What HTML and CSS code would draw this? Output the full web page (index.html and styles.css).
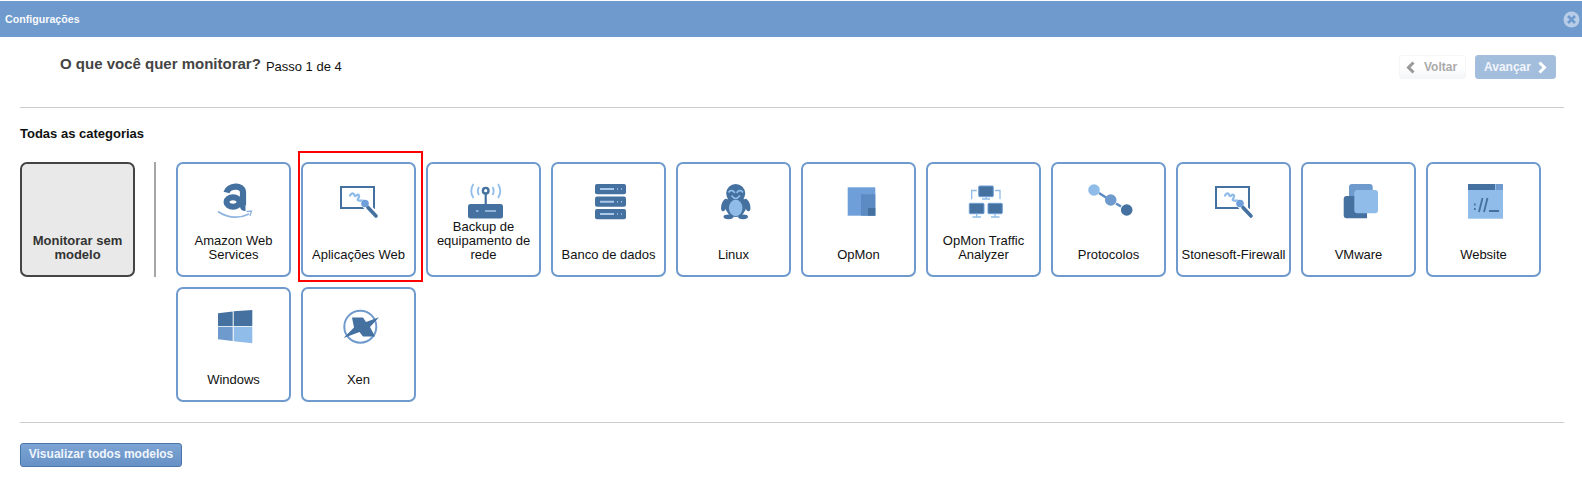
FILE: index.html
```html
<!DOCTYPE html>
<html lang="pt-BR">
<head>
<meta charset="utf-8">
<title>Configurações</title>
<link rel="stylesheet" href="styles.css">
</head>
<body>
<svg class="defs" width="0" height="0" aria-hidden="true">
  <symbol id="paint" viewBox="0 0 36 36" overflow="visible">
    <rect x="-1" y="3" width="33" height="21" fill="#fff" stroke="#44719f" stroke-width="2"/>
    <path d="M8 11.500c2-3.500 4-2 4.500 0s3.500-2.500 4.500 0-3 4-.5 5 4-1 6 1" fill="none" stroke="#8fbce8" stroke-width="2.300" stroke-linecap="round"/>
    <path d="M20 17l15 16" fill="none" stroke="#fff" stroke-width="7.500"/>
    <path d="M26 23.500l8 8.500" fill="none" stroke="#44719f" stroke-width="3.600" stroke-linecap="round"/>
    <circle cx="23" cy="19.500" r="3.800" fill="#6f9fd8"/>
  </symbol>
</svg>

<header class="titlebar">
  <span class="titlebar-text">Configurações</span>
  <svg class="close" width="17" height="17" viewBox="0 0 17 17"><circle cx="8.500" cy="8.500" r="8" fill="#b7cce6"/><path d="M5 5l7 7M12 5l-7 7" stroke="#6f9acd" stroke-width="2.600"/></svg>
</header>

<section class="wizard-head">
  <h1 class="wizard-title">O que você quer monitorar?</h1>
  <span class="wizard-step">Passo 1 de 4</span>
  <div class="wizard-nav">
    <button class="btn-back" type="button"><svg width="9" height="13" viewBox="0 0 9 13"><path d="M7.500 1.500L2.500 6.500l5 5" fill="none" stroke="#999" stroke-width="3"/></svg>Voltar</button>
    <button class="btn-next" type="button">Avançar<svg width="9" height="13" viewBox="0 0 9 13"><path d="M1.500 1.500l5 5-5 5" fill="none" stroke="#fff" stroke-width="3"/></svg></button>
  </div>
</section>

<hr class="rule">

<h2 class="section-title">Todas as categorias</h2>

<section class="catalog">
  <button class="card card-plain" type="button"><span class="card-label">Monitorar sem modelo</span></button>
  <div class="vsep"></div>
  <div class="cards">
    <button class="card" type="button">
      <svg class="ico" viewBox="0 0 36 36"><path d="M9.500 8.500C11 2 26-.5 26 8.500v13c0 1.500.7 2.500 2.500 2.500" fill="none" stroke="#44719f" stroke-width="6.200"/><ellipse cx="16" cy="18" rx="6.500" ry="4.800" fill="none" stroke="#44719f" stroke-width="6"/><path d="M1 27.500c10 7 22 7 31 2.500" fill="none" stroke="#8fb5e0" stroke-width="1.800"/><path d="M29.500 27.500l5-.5-1.500 5" fill="none" stroke="#8fb5e0" stroke-width="1.300"/></svg>
      <span class="card-label">Amazon Web Services</span>
    </button>
    <button class="card card-marked" type="button">
      <svg class="ico"><use href="#paint"/></svg>
      <span class="card-label">Aplicações Web</span>
    </button>
    <button class="card" type="button">
      <svg class="ico" viewBox="0 0 36 36"><rect x="1" y="20" width="35" height="14.500" rx="2.500" fill="#44719f"/><path d="M18.700 9v12" stroke="#44719f" stroke-width="2.200"/><circle cx="18.700" cy="6.700" r="2.800" fill="#fff" stroke="#44719f" stroke-width="2.400"/><path d="M6.500 0C3.500 4 3.500 10 6.500 14M31 0c3 4 3 10 0 14M12 3c-1.500 2.500-1.500 5.500 0 8M25.500 3c1.500 2.500 1.500 5.500 0 8" fill="none" stroke="#8fbce8" stroke-width="1.800"/><path d="M9 27h2.500M18 27h11" stroke="#a9c8ea" stroke-width="1.700"/></svg>
      <span class="card-label">Backup de equipamento de rede</span>
    </button>
    <button class="card" type="button">
      <svg class="ico" viewBox="0 0 36 36"><g fill="#44719f"><rect x="3" y="0" width="31" height="10.300" rx="2"/><rect x="3" y="12.500" width="31" height="10.300" rx="2"/><rect x="3" y="25" width="31" height="10.300" rx="2"/></g><path d="M8 5h14M8 17.700h14M8 30h14" stroke="#a9c8ea" stroke-width="1.900"/><path d="M25 5h1M29 5h1M25 17.700h1M29 17.700h1M25 30h1M29 30h1" stroke="#a9c8ea" stroke-width="1.500"/></svg>
      <span class="card-label">Banco de dados</span>
    </button>
    <button class="card" type="button">
      <svg class="ico" viewBox="0 0 36 36"><g fill="#44719f"><circle cx="18.700" cy="9.500" r="9.500"/><ellipse cx="18.700" cy="22" rx="10.500" ry="11"/><ellipse cx="7.500" cy="21" rx="3" ry="6.500" transform="rotate(18 7.500 21)"/><ellipse cx="30" cy="21" rx="3" ry="6.500" transform="rotate(-18 30 21)"/><ellipse cx="11.500" cy="32.800" rx="5" ry="2.400"/><ellipse cx="26" cy="32.800" rx="5" ry="2.400"/></g><ellipse cx="18.700" cy="24" rx="6.800" ry="8.300" fill="#8fbce8"/><path d="M11.500 8.500c2-3 5-2 6.300.5M26 8.500c-2-3-5-2-6.300.5" fill="none" stroke="#8fbce8" stroke-width="1.700"/><path d="M14.500 11.500c1.500 2 2.800 3 4.200 3s2.700-1 4.200-3" fill="none" stroke="#8fbce8" stroke-width="1.700"/></svg>
      <span class="card-label">Linux</span>
    </button>
    <button class="card" type="button">
      <svg class="ico" viewBox="0 0 36 36"><rect x="5.700" y="3.300" width="27.600" height="28.400" fill="#6f9fd8"/><rect x="19" y="10.300" width="14.300" height="21.400" fill="#5b8bc2"/><rect x="26" y="24" width="7.300" height="7.700" fill="#44719f"/></svg>
      <span class="card-label">OpMon</span>
    </button>
    <button class="card" type="button">
      <svg class="ico" viewBox="0 0 36 36"><g fill="#44719f" stroke="#6f9fd8" stroke-width="1"><rect x="11.700" y="2" width="14.600" height="10.700" rx="1"/><rect x="2.300" y="19.300" width="14.700" height="10.400" rx="1"/><rect x="21" y="19.300" width="14.300" height="10.400" rx="1"/></g><path d="M19 12.700v2M15 15h8M9.700 29.700v3M5.500 33h8.500M28 29.700v3M24 33h8.500M4.700 15.300V6.500h5M33 15.300V6.500h-5" fill="none" stroke="#8fbce8" stroke-width="1.300"/></svg>
      <span class="card-label">OpMon Traffic Analyzer</span>
    </button>
    <button class="card" type="button">
      <svg class="ico" viewBox="0 0 36 36" overflow="visible"><path d="M7 9l7 4.500M24 19.500l5 3" stroke="#5b8bc2" stroke-width="2.600"/><circle cx="2" cy="6" r="5.800" fill="#8fbce8"/><circle cx="18.700" cy="16" r="5.800" fill="#6f9acd"/><circle cx="34.700" cy="26" r="5.800" fill="#44719f"/></svg>
      <span class="card-label">Protocolos</span>
    </button>
    <button class="card" type="button">
      <svg class="ico"><use href="#paint"/></svg>
      <span class="card-label">Stonesoft-Firewall</span>
    </button>
    <button class="card" type="button">
      <svg class="ico" viewBox="0 0 36 36"><rect x="7" y="0" width="23.700" height="24" rx="3" fill="#6f9acd"/><path d="M1.700 15a3 3 0 0 1 3-3H25v22.300H4.700a3 3 0 0 1-3-3z" fill="#44719f"/><rect x="12.300" y="6" width="23.700" height="23.300" rx="3" fill="#8fbce8"/></svg>
      <span class="card-label">VMware</span>
    </button>
    <button class="card" type="button">
      <svg class="ico" viewBox="0 0 36 36"><rect x="1" y="0" width="35" height="34.700" fill="#8fbce8"/><rect x="1" y="0" width="27" height="6" fill="#44719f"/><rect x="29" y="0" width="7" height="6" fill="#6f9acd"/><path d="M7 20.500h1.600M7 25h1.600M12 28l3.500-14M17 28l3.500-14M22 27h10" fill="none" stroke="#44719f" stroke-width="1.800"/></svg>
      <span class="card-label">Website</span>
    </button>
    <button class="card" type="button">
      <svg class="ico" viewBox="0 0 36 36"><path d="M1 4.300L15.700 2.500V17H1z" fill="#44719f"/><path d="M16.700 2.300L35.300 1v16H16.700z" fill="#44719f"/><path d="M1 17.700H15.700V32L1 30.300z" fill="#6f9acd"/><path d="M16.700 17.700H35.300V34.300L16.700 32.200z" fill="#8fbce8"/></svg>
      <span class="card-label">Windows</span>
    </button>
    <button class="card" type="button">
      <svg class="ico" viewBox="0 0 36 36" overflow="visible"><circle cx="18.300" cy="17.700" r="16" fill="none" stroke="#6f9acd" stroke-width="2"/><path d="M10 8.500h11l3 4.500L37 8.300 28 18l5 9.500H21l-3.500-4.500L1.500 29 12 18.500z" fill="#44719f"/></svg>
      <span class="card-label">Xen</span>
    </button>
  </div>
</section>

<hr class="rule rule-bottom">

<button class="btn-all" type="button">Visualizar todos modelos</button>
</body>
</html>
```
FILE: styles.css
```css
* { box-sizing: border-box; }
html, body { margin: 0; padding: 0; }
body {
  background: #fff;
  color: #111;
  font-family: "Liberation Sans", Arial, sans-serif;
  font-size: 13px;
  height: 497px;
  overflow: hidden;
}
button { font-family: inherit; cursor: pointer; }
.defs { position: absolute; }

.titlebar {
  margin-top: 1px;
  height: 36px;
  background: #6f9acd;
  display: flex;
  align-items: center;
  justify-content: space-between;
  padding: 0 2px 0 5px;
}
.titlebar-text { color: #fff; font-size: 10.67px; font-weight: 700; opacity: .95; }
.close { display: block; margin-top: 1px; }

.wizard-head {
  display: flex;
  align-items: flex-start;
  padding: 18px 26px 0 60px;
  height: 70px;
}
.wizard-title {
  margin: 0;
  color: #444;
  font-size: 15px;
  font-weight: 700;
  line-height: 17px;
}
.wizard-step { margin: 5px 0 0 5px; font-size: 13px; line-height: 14px; color: #111; }
.wizard-nav { margin-left: auto; display: flex; gap: 9px; }
.btn-back, .btn-next {
  height: 24px;
  border-radius: 3px;
  font-size: 12px;
  font-weight: 700;
  display: flex;
  align-items: center;
  padding: 0;
}
.btn-back {
  width: 67px;
  gap: 9px;
  padding-left: 6px;
  color: #aaa;
  border: 1px solid #f5f6f8;
  background: linear-gradient(#fff 50%, #f3f5f7);
}
.btn-next {
  width: 81px;
  gap: 7px;
  padding-left: 8px;
  color: #f1f5fa;
  border: 1px solid #a6bfdf;
  background: #a3bddd;
}

.rule { margin: 0 18px 0 20px; border: 0; border-top: 1px solid #ccc; height: 1px; }
.section-title {
  margin: 18px 0 0 20px;
  font-size: 13px;
  line-height: 15px;
  font-weight: 700;
  color: #111;
}

.catalog { display: flex; align-items: flex-start; padding: 21px 18px 0 20px; }
.vsep { width: 2px; height: 115px; background: #a6a6a6; margin: 0 20px 0 19px; flex: none; }
.cards { display: flex; flex-wrap: wrap; gap: 10px; flex: 1; }

.card {
  position: relative;
  width: 115px;
  height: 115px;
  flex: none;
  margin: 0;
  padding: 20px 2px 13px;
  background: #fff;
  border: 2px solid #6f9acd;
  border-radius: 7px;
  display: flex;
  flex-direction: column;
  align-items: center;
  color: #111;
  font-size: 13px;
  line-height: 14px;
}
.card-label { margin-top: auto; display: block; text-align: center; width: 100%; }
.ico { width: 36px; height: 36px; flex: none; display: block; margin-left: 3px; overflow: visible; }

.card-plain {
  background: #e9e9e9;
  border-color: #444;
  color: #333;
  font-weight: 700;
}

.card-marked::after {
  content: "";
  box-sizing: border-box;
  position: absolute;
  left: -5px;
  top: -13px;
  width: 125px;
  height: 131px;
  border: 2px solid #f00;
  pointer-events: none;
}

.rule-bottom { margin-top: 20px; }
.btn-all {
  display: block;
  margin: 20px 0 0 20px;
  width: 162px;
  height: 24px;
  padding: 0 0 2px;
  font-size: 12px;
  font-weight: 700;
  color: #f0f5fb;
  border: 1px solid #4a75a8;
  border-radius: 3px;
  background: linear-gradient(#7ca4d4, #6791c6);
}
```
